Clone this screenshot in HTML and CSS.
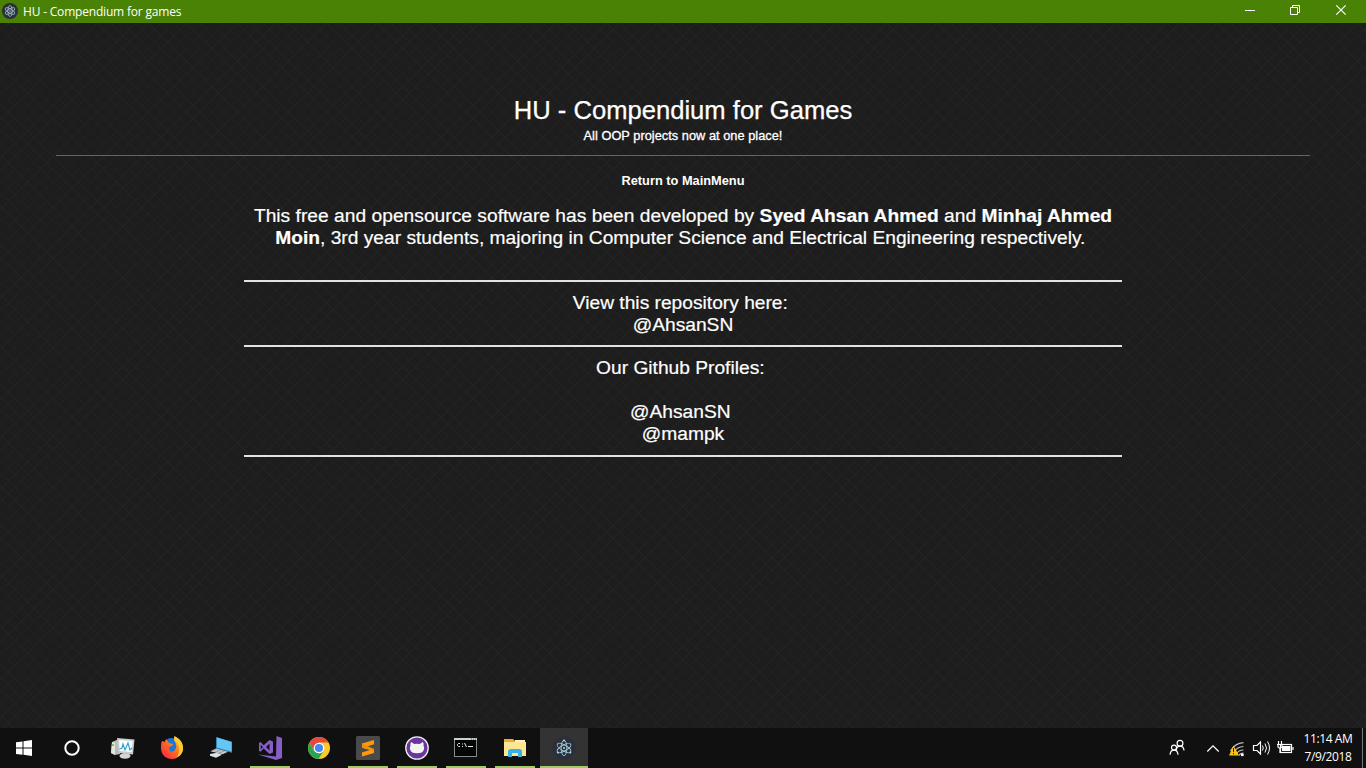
FILE: index.html
```html
<!DOCTYPE html>
<html lang="en">
<head>
<meta charset="utf-8">
<title>HU - Compendium for games</title>
<link rel="stylesheet" href="styles.css">
</head>
<body>
<header class="titlebar">
  <svg class="app-icon" width="16" height="16" viewBox="0 0 16 16"><circle cx="8" cy="8" r="8" fill="#2b2e3b"/><g fill="none" stroke="#a2bdc8" stroke-width=".8"><ellipse cx="8" cy="8" rx="5.400" ry="2.100" transform="rotate(30 8 8)"/><ellipse cx="8" cy="8" rx="5.400" ry="2.100" transform="rotate(90 8 8)"/><ellipse cx="8" cy="8" rx="5.400" ry="2.100" transform="rotate(150 8 8)"/></g><circle cx="8" cy="8" r=".8" fill="#a2bdc8"/></svg>
  <span class="caption">HU - Compendium for games</span>
  <div class="controls">
    <svg width="46" height="23" viewBox="0 0 46 23"><path d="M18 10.500h10" stroke="#fff"/></svg>
    <svg width="46" height="23" viewBox="0 0 46 23"><path d="M17.500 7.500h7v7h-7zM19.500 7.500v-2h7v7h-2" fill="none" stroke="#fff"/></svg>
    <svg width="46" height="23" viewBox="0 0 46 23"><path d="M17.300 5.300l9.400 9.400M26.700 5.300l-9.400 9.400" stroke="#fff" stroke-width="1.200"/></svg>
  </div>
</header>
<main class="page">
  <div class="heading">
    <h1>HU - Compendium for Games</h1>
    <p class="tagline">All OOP projects now at one place!</p>
  </div>
  <nav class="return">Return to MainMenu</nav>
  <div class="about">
    <p class="intro"><span class="lead">This free and opensource software has been developed by <b>Syed Ahsan Ahmed</b> and <b>Minhaj Ahmed</b></span><br><b>Moin</b>, 3rd year students, majoring in Computer Science and Electrical Engineering respectively.&nbsp;</p>
    <section class="repo"><p>View this repository here:&nbsp;<br>@AhsanSN</p></section>
    <section class="profiles"><p>Our Github Profiles:&nbsp;<br><br>@AhsanSN&nbsp;<br>@mampk</p></section>
  </div>
</main>
<footer class="taskbar">
  <div class="item"><svg width="48" height="40" viewBox="0 0 48 40"><path d="M16 14.300l6.500-.9v6.200H16zM23.500 13.200l8.500-1.200v7.600h-8.500zM16 20.600h6.500v6.200l-6.500-.9zM23.500 20.600H32V28l-8.500-1.200z" fill="#fff"/></svg></div>
  <div class="item"><svg width="48" height="40" viewBox="0 0 48 40"><circle cx="24" cy="20" r="6.700" fill="none" stroke="#fff" stroke-width="2"/></svg></div>
  <div class="apps">
    <div class="item"><svg width="48" height="40" viewBox="0 0 48 40"><path d="M13 14l7-3 1 15-5 1-4-2z" fill="#b9bdb9"/><path d="M13 14l3 1v12l-4-2z" fill="#e3e4e0"/><path d="M18 10l17.500 1.500-1.500 15-14-1.500z" fill="#c9cccb"/><path d="M20 12l13.500 1-.8 11-12-1z" fill="#f9ffff"/><path d="M20.500 21l2.500-1 1-4 2 6 3-7 2 7 2-2" fill="none" stroke="#2f9bd0" stroke-width="1.100"/><path d="M24 25h4v3h-4z" fill="#999"/><ellipse cx="26" cy="28" rx="5.500" ry="2.700" fill="#d5d5d5"/><circle cx="14" cy="17" r="1" fill="#43c51b"/></svg></div>
    <div class="item"><svg width="48" height="40" viewBox="0 0 48 40"><defs><linearGradient id="fox" x1="0" y1="1" x2="1" y2="0"><stop offset="0" stop-color="#ff1654"/><stop offset=".48" stop-color="#ff6a20"/><stop offset="1" stop-color="#ffe226"/></linearGradient></defs><circle cx="23.500" cy="18" r="8" fill="#1677df"/><path d="M14 13l3 1 1-3 3 4 4 1-1 2-3 1 1 4c3 2 5-1 6-3 1-3-1-6-2-8l1-3c5 2 8 7 8 11 0 6-5 11-11 11S13 27 13 20c0-3 0-5 1-7z" fill="url(#fox)"/><path d="M26.500 8c6 3 8.500 7 8.500 12 0 5-3 8-6 9 4-7 2-12-1-15-2-2-2.500-4-1.500-6z" fill="#ffcd2d"/></svg></div>
    <div class="item"><svg width="48" height="40" viewBox="0 0 48 40"><path d="M19 9l16 4.700v11L19 20.500z" fill="#3086b9"/><path d="M20 9.500L34.500 14v9.500L20 19.500z" fill="#65c5f4"/><path d="M19 20.500l12 3.200-5.500 2.500-12-3z" fill="#d5dce0"/><path d="M13 26l7-1.200 5 2-6 3-6-2z" fill="#dfe3e5"/><path d="M16 22.500l10 2.700M18 21.500l10 2.500" stroke="#78868d" stroke-width=".7"/></svg></div>
    <div class="item running"><svg width="48" height="40" viewBox="0 0 48 40"><path d="M30.500 8l5.500 2v20l-6 2-18-5.500 18 2z" fill="#865fc5"/><path d="M14.500 14l3.200 3.200L23.500 12l3.500 1.500v11L23.500 26l-5.800-5.500-3.200 3.300L13 23v-8zM23.500 15.500L20 19l3.500 3.500zM14.700 16.800v4.400l2.300-2.200z" fill="#865fc5" fill-rule="evenodd"/></svg></div>
    <div class="item"><svg width="48" height="40" viewBox="0 0 48 40"><circle cx="24" cy="20" r="11" fill="#fbc92d"/><path d="M14.500 14.500A11 11 0 0 1 33.500 14.500H24l-5 8z" fill="#e34a3f"/><path d="M14.500 14.500A11 11 0 0 0 23.500 31l5-8-4.500 2.500-5-2.500z" fill="#2aa35a"/><circle cx="24" cy="20" r="5.300" fill="#fff"/><circle cx="24" cy="20" r="4.100" fill="#4686f4"/></svg></div>
    <div class="item running"><svg width="48" height="40" viewBox="0 0 48 40"><rect x="12" y="8" width="24" height="24" rx="1.500" fill="#4a4a4a"/><path d="M18 15.500l12-3.500v4.200L22 18.700l8 2.300v4l-12 3.500v-4l8-2.500-8-2.200z" fill="#ff9b0b"/><path d="M18 15.500v4.300l12 3.200v-2z" fill="#f08c06"/></svg></div>
    <div class="item running"><svg width="48" height="40" viewBox="0 0 48 40"><circle cx="24" cy="20" r="11.200" fill="#6a369e" stroke="#eee" stroke-width="1.300"/><path d="M18 14l3.300 2q2.700-.5 5.400 0L30 14q1 2 .5 3.500 1 2 .3 4.200-.8 3.500-6.800 3.500t-6.800-3.500q-.7-2.200.3-4.200-.5-1.500.5-3.500z" fill="#f4f4f4"/></svg></div>
    <div class="item running"><svg width="48" height="40" viewBox="0 0 48 40"><rect x="12.500" y="10.500" width="22" height="18" fill="#050505" stroke="#858a8d"/><path d="M12 10h23v2H12z" fill="#c8d0d4"/><path d="M29 11h1M31 11h1M33 11h1" stroke="#455"/><path d="M18 15.500h-1.500l-1 1v1l1 1H18M20.500 15.500v1M20.500 18v1M22.500 15l2 4M26 18.500h5" stroke="#e8e8e8" fill="none"/></svg></div>
    <div class="item running"><svg width="48" height="40" viewBox="0 0 48 40"><path d="M13 11h9l2 2h10v15H13z" fill="#e8af32"/><path d="M13 14h22v14H13z" fill="#ffe591"/><path d="M24 12h10v2H24z" fill="#fff3c0"/><path d="M17 29v-6.500l2-1.500h10l2 1.500V29h-4v-4h-6v4z" fill="#38b1e7"/></svg></div>
    <div class="item running active"><svg width="48" height="40" viewBox="0 0 48 40"><circle cx="24" cy="20" r="11.500" fill="#2b2e3b"/><g fill="none" stroke="#9fc9d3" stroke-width=".9"><ellipse cx="24" cy="20" rx="7.700" ry="2.900" transform="rotate(30 24 20)"/><ellipse cx="24" cy="20" rx="7.700" ry="2.900" transform="rotate(90 24 20)"/><ellipse cx="24" cy="20" rx="7.700" ry="2.900" transform="rotate(150 24 20)"/></g><g fill="#b4dce4"><circle cx="24" cy="20" r="1"/><circle cx="24" cy="12.500" r="1"/><circle cx="17.800" cy="24.500" r="1"/><circle cx="30.300" cy="24.500" r="1"/></g></svg></div>
  </div>
  <div class="tray">
    <svg width="136" height="40" viewBox="0 0 136 40"><g fill="none" stroke="#fff" stroke-width="1.200">
      <circle cx="20" cy="15.300" r="2.900"/><path d="M16.200 22.500q.3-4.200 3.800-4.300 3.700.1 4 4.300"/><circle cx="14" cy="19.600" r="2.500"/><path d="M10.100 26.800q.2-4.500 3.900-4.600 3.700.1 4 4.600"/>
      <path d="M47.300 23.500l5.700-5.700 5.700 5.700"/>
      <path d="M97 17.500h-3.500v5H97l3.500 3.500V14z"/><path d="M102.500 17.500q1.500 2.500 0 5M105 15.500q3 4.500 0 9M107.500 13.500q4 6.500 0 13" stroke-width="1"/>
      <rect x="120.500" y="16.500" width="11" height="8"/><path d="M133 19v3"/><path d="M118.500 13v3M121.500 13v3M117 16.500h6M118 17v2l2 1.500 2-1.500v-2M120 21v4"/>
    </g><rect x="122" y="18" width="8.500" height="5" fill="#fff"/>
    <g fill="none" stroke="#bbb" stroke-width="1.200"><path d="M70.500 23q4-7.500 13-8.300M73.500 24.500q3-5.500 10-6M76.500 26q2-4 7-4M79 27.500q1-2.500 4.500-2.500"/></g><circle cx="82.300" cy="26.700" r="1.500" fill="#fff"/><path d="M73.500 17.500L79 27.500H69z" fill="#ffc20e"/><path d="M73.500 20v4M73.500 25v1.300" stroke="#222"/></svg>
    <div class="clock">11:14 AM<br>7/9/2018</div>
  </div>
</footer>
</body>
</html>
```
FILE: styles.css
```css
* { box-sizing: border-box; }
body { margin: 0; width: 1366px; height: 768px; overflow: hidden; display: flex; flex-direction: column; color: #fff; background: #1d1d1d; font-family: "Liberation Sans", Arial, sans-serif; }
h1, p { margin: 0; font-weight: 400; }
svg { display: block; flex: none; }
.titlebar { height: 23px; flex: none; display: flex; align-items: center; background: #498205; padding-left: 2px; }
.app-icon { margin-top: -1px; }
.caption { margin-left: 5px; font: 12px/22px "Open Sans", sans-serif; letter-spacing: -.19px; white-space: nowrap; }
.controls { display: flex; margin-left: auto; margin-right: 1px; }
.page { flex: 1; padding: 71px 56px 0; text-align: center; background-color: #1d1d1d; background-image: repeating-linear-gradient(45deg, rgba(255,255,255,.02) 0 1px, transparent 1px 9px), repeating-linear-gradient(-45deg, rgba(255,255,255,.02) 0 1px, transparent 1px 9px); }
.heading { height: 62px; border-bottom: 1px solid #656565; }
h1 { font-size: 25.6px; line-height: 32px; -webkit-text-stroke: .25px #fff; }
.tagline { font-size: 12.8px; line-height: 19px; letter-spacing: .02px; -webkit-text-stroke: .3px #fff; }
.return { margin-top: 16px; font-size: 12.8px; line-height: 18px; font-weight: 700; }
.about { width: 878px; margin: 15px auto 0; font-size: 19.2px; line-height: 22px; -webkit-text-stroke: .2px #fff; }
.about p { white-space: nowrap; }
.intro { height: 75px; }
.lead { letter-spacing: .02px; }
.repo, .profiles { border-top: 2px solid #e2e2e2; padding-top: 10px; }
.repo { height: 65px; }
.profiles { height: 112px; border-bottom: 2px solid #e2e2e2; }
.taskbar { height: 40px; flex: none; display: flex; background: #101010; }
.item { width: 48px; height: 40px; }
.apps { display: flex; gap: 1px; margin-left: 3px; }
.running { background: linear-gradient(#a0cc66, #a0cc66) 4px 38px / 40px 2px no-repeat; }
.active { background: linear-gradient(#a0cc66, #a0cc66) 0 38px / 48px 2px no-repeat #333; }
.tray { margin-left: auto; display: flex; width: 206px; }
.clock { width: 67px; padding: 2px 2px 0 0; border-right: 1px solid #777; text-align: center; white-space: nowrap; font: 12px/18px "Open Sans", sans-serif; letter-spacing: -.4px; }
```
